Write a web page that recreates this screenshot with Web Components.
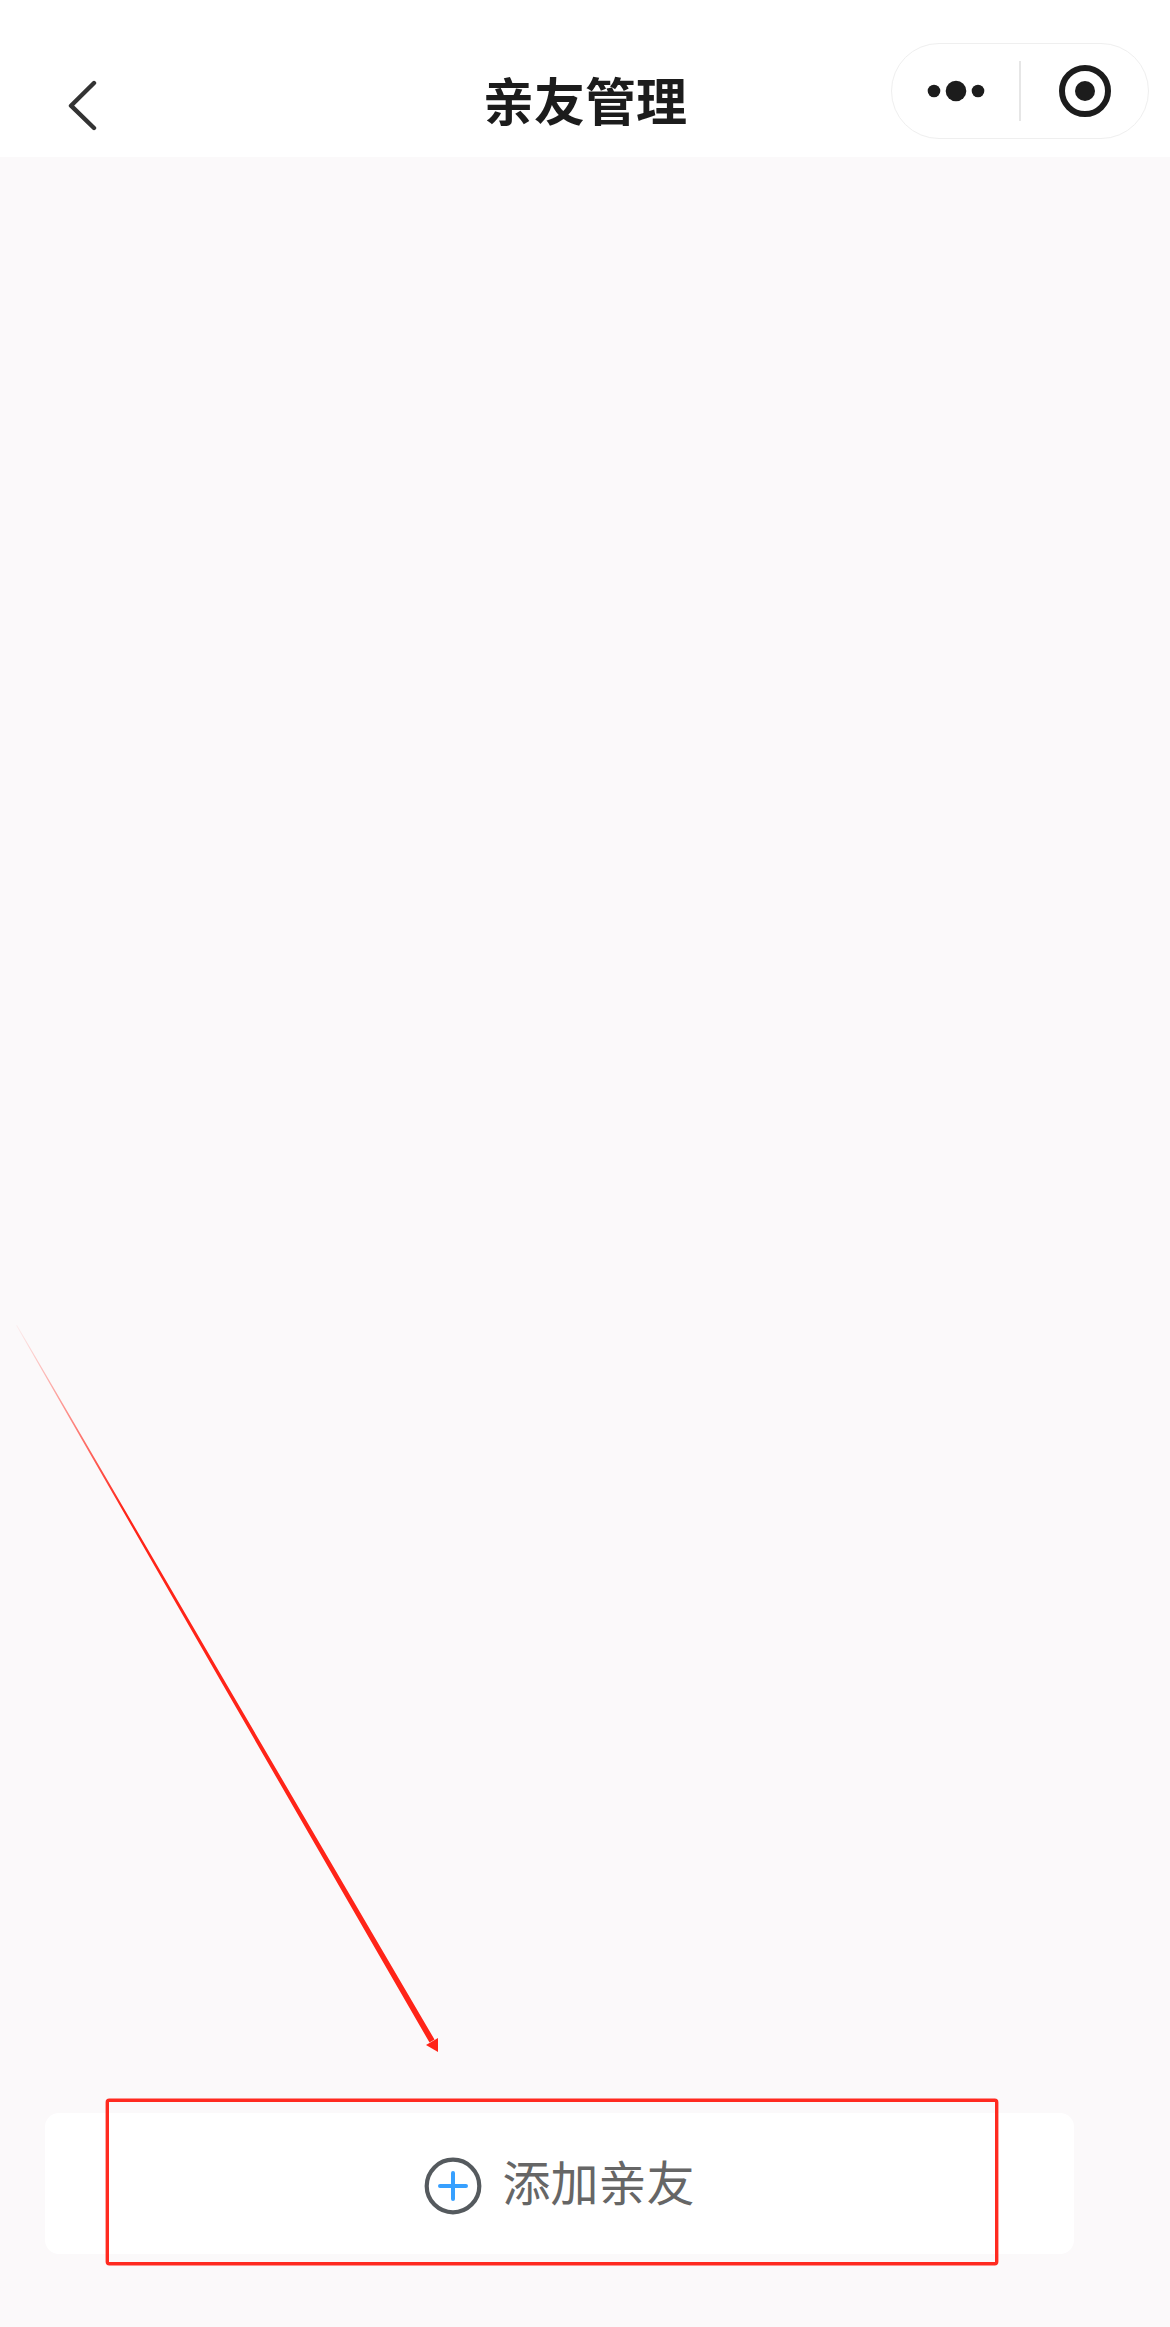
<!DOCTYPE html>
<html lang="zh">
<head>
<meta charset="utf-8">
<title>亲友管理</title>
<style>
  html, body { margin: 0; padding: 0; background: #fbf9fa; }
</style>
</head>
<body>
<friend-page>
  <mini-navbar slot="nav" title="亲友管理"></mini-navbar>
  <add-card slot="footer">添加亲友</add-card>
  <mark-up slot="overlay"></mark-up>
</friend-page>

<script>
// 页面骨架：顶部导航 + 空列表 + 底部按钮
class FriendPage extends HTMLElement {
  constructor() {
    super();
    this.attachShadow({ mode: 'open' });
    this.shadowRoot.innerHTML = `
      <style>
        :host {
          display: flex;
          flex-direction: column;
          position: relative;
          width: 1170px;
          height: 2327px;
          overflow: hidden;
          background: #fbf9fa;
          font-family: "Noto Sans CJK SC", "Noto Sans", sans-serif;
        }
        .list { flex: 1; }
        .foot { padding: 0 96px 73px 45px; }
      </style>
      <slot name="nav"></slot>
      <div class="list"></div>
      <div class="foot"><slot name="footer"></slot></div>
      <slot name="overlay"></slot>
    `;
  }
}

// 小程序导航栏，右边是胶囊按钮
class MiniNavbar extends HTMLElement {
  constructor() {
    super();
    this.attachShadow({ mode: 'open' });
    this.shadowRoot.innerHTML = `
      <style>
        :host {
          display: grid;
          grid-template-columns: 1fr auto 1fr;
          height: 157px;
          background: #fff;
        }
        .back { margin: 80px 0 0 66px; width: 32px; height: 52px; }
        .back svg { display: block; }
        h1 {
          margin: 64px 0 0;
          font-size: 51px;
          line-height: 70px;
          font-weight: 700;
          color: #1c1c1c;
          white-space: nowrap;
        }
        .right { display: flex; justify-content: flex-end; padding: 43px 21px 0 0; }
        .capsule {
          box-sizing: border-box;
          display: flex;
          align-items: center;
          width: 258px;
          height: 96px;
          border: 1.5px solid #efefef;
          border-radius: 48px;
          background: #fff;
        }
        .capsule svg { display: block; }
        .sep { width: 1.5px; height: 60px; background: #e6e6e6; }
        .cell { flex: 1; display: flex; justify-content: center; }
      </style>
      <div class="back">
        <svg width="32" height="52" viewBox="0 0 32 52">
          <path d="M28 3 L5 25.7 L28 48" fill="none" stroke="#333" stroke-width="4.4" stroke-linecap="round" stroke-linejoin="round"/>
        </svg>
      </div>
      <h1></h1>
      <div class="right">
        <div class="capsule">
          <div class="cell">
            <svg width="68" height="24" viewBox="0 0 68 24" fill="#1c1c1c">
              <circle cx="12" cy="12" r="6.3"/><circle cx="34" cy="12" r="10.3"/><circle cx="56" cy="12" r="6.3"/>
            </svg>
          </div>
          <div class="sep"></div>
          <div class="cell">
            <svg width="56" height="56" viewBox="0 0 56 56" style="margin-left:2px">
              <circle cx="28" cy="28" r="23" fill="none" stroke="#1c1c1c" stroke-width="6"/>
              <circle cx="28" cy="28" r="10" fill="#1c1c1c"/>
            </svg>
          </div>
        </div>
      </div>
    `;
  }

  connectedCallback() {
    this.shadowRoot.querySelector('h1').textContent = this.getAttribute('title') || '';
  }
}

// 底部“添加”按钮
class AddCard extends HTMLElement {
  constructor() {
    super();
    this.attachShadow({ mode: 'open' });
    this.shadowRoot.innerHTML = `
      <style>
        :host {
          display: flex;
          align-items: center;
          justify-content: center;
          gap: 20px;
          height: 141px;
          border-radius: 14px;
          background: #fff;
          color: #666;
          font-size: 48px;
        }
        svg { display: block; flex: none; margin-top: 4px; }
        span { line-height: 60px; padding-bottom: 8px; white-space: nowrap; }
      </style>
      <svg width="58" height="58" viewBox="0 0 58 58">
        <circle cx="29" cy="29" r="26.3" fill="none" stroke="#555a5e" stroke-width="4.2"/>
        <path d="M29 16 V42 M16 29 H42" fill="none" stroke="#37a0ff" stroke-width="4" stroke-linecap="round"/>
      </svg>
      <span><slot></slot></span>
    `;
  }
}

// 截图上后加的红色标注：箭头和方框，盖在页面上
class MarkUp extends HTMLElement {
  constructor() {
    super();
    this.attachShadow({ mode: 'open' });
    this.shadowRoot.innerHTML = `
      <style>
        :host { position: absolute; left: 0; top: 0; width: 1170px; height: 2327px; pointer-events: none; }
        svg { display: block; }
      </style>
      <svg width="1170" height="2327" viewBox="0 0 1170 2327">
        <defs>
          <linearGradient id="fade" gradientUnits="userSpaceOnUse" x1="17" y1="1325" x2="125" y2="1512">
            <stop offset="0" stop-color="#ff2418" stop-opacity="0.05"/>
            <stop offset="1" stop-color="#ff2418"/>
          </linearGradient>
        </defs>
        <polygon points="17,1325 226.4,1684 434.5,2039.5 429.5,2042.5 223.6,1686 16.2,1325.5" fill="url(#fade)"/>
        <polygon points="438,2052 426,2045 438,2038" fill="#ff2418"/>
        <rect x="107.3" y="2100.3" width="889.4" height="163.4" rx="2" fill="none" stroke="#ff2a20" stroke-width="3.4"/>
      </svg>
    `;
  }
}

customElements.define('friend-page', FriendPage);
customElements.define('mini-navbar', MiniNavbar);
customElements.define('add-card', AddCard);
customElements.define('mark-up', MarkUp);
</script>
</body>
</html>
